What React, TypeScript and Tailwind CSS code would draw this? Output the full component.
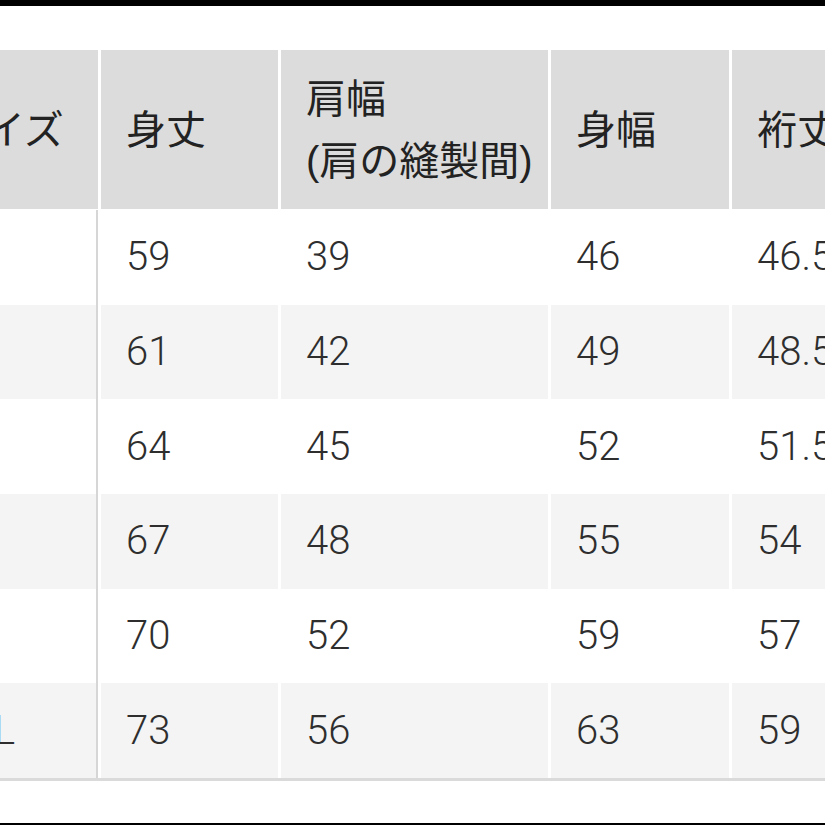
import React from 'react'

const rows = [
  { size: 'XS', vals: ['59', '39', '46', '46.5'] },
  { size: 'S', vals: ['61', '42', '49', '48.5'] },
  { size: 'M', vals: ['64', '45', '52', '51.5'] },
  { size: 'L', vals: ['67', '48', '55', '54'] },
  { size: 'XL', vals: ['70', '52', '59', '57'] },
  { size: 'XXL', vals: ['73', '56', '63', '59'] },
];

const gridCols = 'grid grid-cols-[178px_177px_267px_178px_150px] gap-x-[3px] ml-[-80px] w-[956px]';

export default function App() {
  return (
    <div
      className="w-full h-[825px] overflow-hidden bg-white flex flex-col text-[40px] text-[#222]"
      style={{ fontFamily: '"Liberation Sans", "Noto Sans CJK JP", sans-serif' }}
    >
      <div className="h-[6px] bg-black shrink-0" />

      <div className="mt-[44px] shrink-0">
        {/* header */}
        <div className={`${gridCols} h-[159px]`}>
          <div className="bg-[#dcdcdc] pl-[25px] flex items-center whitespace-nowrap">サイズ</div>
          <div className="bg-[#dcdcdc] pl-[25px] flex items-center whitespace-nowrap">身丈</div>
          <div className="bg-[#dcdcdc] pl-[25px] flex flex-col justify-center leading-[62px] whitespace-nowrap">
            <span>肩幅</span>
            <span>(肩の縫製間)</span>
          </div>
          <div className="bg-[#dcdcdc] pl-[25px] flex items-center whitespace-nowrap">身幅</div>
          <div className="bg-[#dcdcdc] pl-[25px] flex items-center whitespace-nowrap">裄丈</div>
        </div>

        {/* body */}
        <div
          className="mt-[1px] border-b-[3px] border-[#dadada] text-[#2e2e2e] font-light"
          style={{ fontFamily: 'Roboto, "Liberation Sans", sans-serif' }}
        >
          {rows.map((r, i) => {
            const bg = i % 2 === 1 ? 'bg-[#f4f4f4]' : 'bg-white';
            return (
              <div key={r.size} className={`${gridCols} h-[94.67px]`}>
                <div className={`${bg} pl-[25px] flex items-center border-r-2 border-[#d6d6d6] whitespace-nowrap`}>
                  {r.size}
                </div>
                {r.vals.map((v, j) => (
                  <div key={j} className={`${bg} pl-[25px] flex items-center whitespace-nowrap`}>
                    {v}
                  </div>
                ))}
              </div>
            );
          })}
        </div>
      </div>

      <div className="flex-1" />
      <div className="h-[2px] bg-black shrink-0" />
    </div>
  )
}
